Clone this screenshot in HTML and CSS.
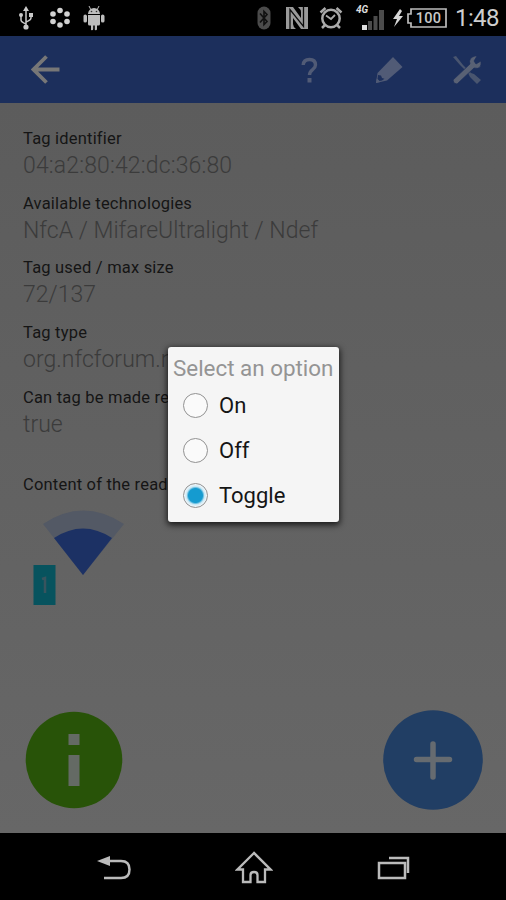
FILE: index.html
```html
<!DOCTYPE html>
<html lang="en">
<head>
<meta charset="utf-8">
<title>Tag details</title>
<link rel="stylesheet" href="styles.css">
</head>
<body>
<div class="phone">
  <header class="status">
    <div class="status-left">
      <svg width="16" height="26" viewBox="0 0 16 26" fill="none" stroke="#c9c9c9" stroke-width="1.5"><path d="M8 4V22M3 11v4q0 2 5 4M13 10v3q0 2-5 4"/><g fill="#c9c9c9" stroke="none"><path d="M8 1l3 5H5z"/><circle cx="8" cy="22" r="2.6"/><circle cx="3" cy="10" r="2"/><path d="M11 8h4v4h-4z"/></g></svg>
      <svg width="22" height="22" viewBox="0 0 22 22" fill="#d2d2d2"><circle cx="11" cy="3.5" r="2.8"/><circle cx="4" cy="7" r="2.8"/><circle cx="18" cy="7" r="2.8"/><circle cx="4" cy="14.5" r="2.8"/><circle cx="18" cy="14.5" r="2.8"/><circle cx="11" cy="18" r="2.8"/></svg>
      <svg width="22" height="26" viewBox="0 0 22 26" fill="#bdbdbd"><path d="M5 9a6 6 0 0 1 12 0zM5 10h12v9q0 1.500-1.500 1.500H14V24q0 1.300-1.300 1.300T11.800 24v-3.500h-1.600V24q0 1.300-1.300 1.300T8 24v-3.500H6.500Q5 20.500 5 19zM.5 11q0-1.500 1.700-1.500T4 11v5q0 1.500-1.800 1.500T.5 16zM18 11q0-1.500 1.700-1.500t1.800 1.500v5q0 1.500-1.800 1.500T18 16z"/><path d="M6 1l2 4M16 1l-2 4" stroke="#bdbdbd"/><circle cx="8.500" cy="6.500" r=".8" fill="#333"/><circle cx="13.500" cy="6.500" r=".8" fill="#333"/></svg>
    </div>
    <div class="status-right">
      <svg class="bt" width="14" height="24" viewBox="0 0 14 24"><rect x=".5" y=".5" width="13" height="23" rx="6.500" fill="#4b4b4b"/><path d="M3 7.500l7 8-3 3v-13l3 3-7 8" fill="none" stroke="#101010" stroke-width="1.600"/></svg>
      <svg class="nfc" width="22" height="22" viewBox="0 0 22 22"><path d="M0 0h7l8 11V5q0-2.500-3-5h10v22h-7L7 11v6q0 2.500 3 5H0z" fill="#9a9a9a"/><path d="M4 22V2.500l13.500 17V0" fill="none" stroke="#0c0c0c" stroke-width="1.300"/></svg>
      <svg class="alarm" width="24" height="24" viewBox="0 0 24 24" fill="none" stroke="#aaa" stroke-width="2.500"><circle cx="12" cy="12.500" r="8.700"/><path d="M7 9.500l5 3.500 4-4" stroke-width="1.800"/><path d="M1.500 6.500l5-4.500M22.500 6.500l-5-4.500M6 19l-3 3M18 19l3 3"/></svg>
      <div class="signal"><span>4G</span><svg width="22" height="20" viewBox="0 0 22 20"><path d="M0 15h5v5H0z" fill="#ddd"/><path d="M6 11h4v9H6zM11.500 6h4v14h-4zM17 0h5v20h-5z" fill="#4b4b4b"/></svg></div>
      <svg class="bolt" width="12" height="18" viewBox="0 0 12 18"><path d="M8 0L1 10h4l-3 8 9-11H7l3-5z" fill="#d6d6d6"/></svg>
      <div class="battery"><svg width="40" height="20" viewBox="0 0 40 20" fill="none" stroke="#bcbcbc" stroke-width="1.700"><path d="M4 1h35v18H4v-4H1V6h3z"/></svg><span>100</span></div>
      <span class="clock">1:48</span>
    </div>
  </header>
  <nav class="toolbar">
    <svg width="30" height="30" viewBox="0 0 30 30" fill="none" stroke="#777777" stroke-width="3.800"><path d="M28.500 14.500H4M15.500 1.500L2.500 14.500l13 13"/></svg>
    <div class="actions">
      <svg width="18" height="28" viewBox="0 0 18 28"><path d="M3.200 9Q3.500 3.500 9.500 3.500t6 5.500c0 4.500-6 4.500-6 10" fill="none" stroke="#515b76" stroke-width="3.400"/><path d="M7.500 22h4v4.500h-4z" fill="#515b76"/></svg>
      <svg width="28" height="28" viewBox="0 0 28 28"><path d="M18 1l9.500 10L12 24.500 1 27l1.500-10z" fill="#515b76"/><path d="M3 19l3 .5 1 2.500 2.500.8-2.500 1.700-2.500.5-2-2z" fill="#1c2f5c"/><path d="M1 27l.7-4.500 3.500 3.500z" fill="#515b76"/></svg>
      <svg width="30" height="30" viewBox="0 0 30 30"><path d="M1 2l3-1 7 9 8 8 3 1 7 6-4 4-7-7-2-4-8-8z" fill="#49556f"/><path d="M1 25L18 9q-2-6 5-8h2l-3 5 2 3 5-3q1 9-7 7L5 29l-3-1z" fill="#596174" stroke="#1c2f5c" stroke-width=".7"/></svg>
    </div>
  </nav>
  <main class="content">
    <dl class="details">
      <div><dt>Tag identifier</dt><dd class="identifier">04:a2:80:42:dc:36:80</dd></div>
      <div><dt>Available technologies</dt><dd>NfcA / MifareUltralight / Ndef</dd></div>
      <div><dt>Tag used / max size</dt><dd>72/137</dd></div>
      <div><dt>Tag type</dt><dd>org.nfcforum.n</dd></div>
      <div><dt>Can tag be made re</dt><dd>true</dd></div>
    </dl>
    <p class="record-title">Content of the read</p>
    <svg class="wifi" width="92" height="96" viewBox="0 0 92 96"><path d="M10 14Q50-13 91 14L50 65z" fill="#535965"/><path d="M21 28q29-19 58 0L50 65z" fill="#1c3164"/><path d="M.5 55h22v40H.5z" fill="#07535e"/><path d="M9 69l3-1v15" fill="none" stroke="#38545e" stroke-width="2.500"/></svg>
    <div class="fabs">
      <svg class="info" width="98" height="98" viewBox="0 0 98 98"><circle cx="49" cy="49" r="48.300" fill="#285308"/><path d="M43.500 23h11v11h-11zM43.500 44h11v31h-11z" fill="#646a64"/></svg>
      <svg width="100" height="100" viewBox="0 0 100 100"><circle cx="50" cy="50" r="49.800" fill="#213e64"/><path d="M50 34v33M33.500 49.500h33" stroke="#666b70" stroke-width="5.500" stroke-linecap="round"/></svg>
    </div>
    <section class="dialog">
      <h1>Select an option</h1>
      <label><i class="radio"></i><span>On</span></label>
      <label><i class="radio"></i><span>Off</span></label>
      <label><i class="radio checked"></i><span>Toggle</span></label>
    </section>
  </main>
  <footer class="navbar">
    <svg width="34" height="26" viewBox="0 0 34 26"><path d="M12 6h12q8.500 0 8.500 8.500T24 23H7" fill="none" stroke="#bbb" stroke-width="2.500"/><path d="M0 6l13-5v10z" fill="#bbb"/></svg>
    <svg width="38" height="34" viewBox="0 0 38 34" fill="none" stroke="#bbb" stroke-width="2.300"><path d="M19 2L2.500 18.500H8V31h7.500v-7q0-3 3.500-3t3.500 3v7H30V18.500h5.500z"/></svg>
    <svg width="34" height="24" viewBox="0 0 34 24" fill="none" stroke="#bbb" stroke-width="2.500"><path d="M2 7h26v15H2zM12 2h19v15"/></svg>
  </footer>
</div>
</body>
</html>
```
FILE: styles.css
```css
* { box-sizing: border-box; }
body { margin: 0; background: #000; font-family: Roboto, "Liberation Sans", sans-serif; }
svg { display: block; flex: none; }
.phone { width: 506px; height: 900px; display: flex; flex-direction: column; overflow: hidden; }
.status { height: 36px; display: flex; justify-content: space-between; background: #000; padding: 0 8px 0 18px; flex: none; }
.status-left, .status-right { display: flex; align-items: center; }
.status-left { gap: 14px; }
.status-left svg:nth-child(2) { margin-left: 1px; }
.status-left svg:nth-child(3) { margin-left: -2px; }
.nfc { margin-left: 15px; }
.alarm { margin-left: 11px; }
.signal { position: relative; width: 28px; height: 24px; margin-left: 13px; display: flex; justify-content: flex-end; align-items: flex-end; }
.signal span { position: absolute; left: 0; top: -1px; font-size: 10px; line-height: 10px; font-weight: 700; font-style: italic; color: #ddd; }
.bolt { margin-left: 8px; }
.battery { position: relative; width: 40px; height: 20px; margin-left: 3px; }
.battery span { position: absolute; inset: 0 0 0 3px; text-align: center; line-height: 21px; font-size: 14.5px; font-weight: 500; letter-spacing: .3px; color: #c8c8c8; }
.clock { margin-left: 8px; width: 43px; font-size: 24px; line-height: 37px; color: #cecece; letter-spacing: -.6px; }
.toolbar { height: 67px; flex: none; display: flex; align-items: center; justify-content: space-between; background: #1c2f5c; padding: 0 24px 0 31px; }
.actions { display: flex; align-items: center; gap: 58px; }
.actions svg:first-child { margin-right: -1px; }
.actions svg:nth-child(3) { margin-left: -9px; }
.content { position: relative; flex: 1; display: flex; flex-direction: column; padding: 24px 23px 23px; background: linear-gradient(#5c5c5c, #676767); }
.details { margin: 0; }
.details div { height: 64.7px; }
dt, .record-title { margin: 0; font-size: 16.5px; line-height: 24px; color: #151515; white-space: nowrap; letter-spacing: .2px; }
dd { margin: 0; font-size: 23px; line-height: 30px; color: #3b3b3b; white-space: nowrap; font-weight: 300; letter-spacing: .03px; }
.identifier { letter-spacing: .15px; }
.record-title { margin-top: 22.5px; }
.wifi { margin: 13px 0 0 10px; }
.fabs { margin-top: auto; display: flex; justify-content: space-between; align-items: center; padding-left: 2px; }
.dialog { position: absolute; left: 168px; top: 244px; width: 171px; height: 175px; border-radius: 3px; background: #f5f5f5; box-shadow: 0 2px 6px 1px rgba(0,0,0,.75); }
h1 { margin: 0; padding: 7px 0 0 5px; height: 35.5px; font-size: 22.4px; line-height: 28px; font-weight: 400; color: #949494; white-space: nowrap; }
label { height: 45px; display: flex; align-items: center; gap: 11px; padding-left: 15px; font-size: 22px; color: #151515; }
.radio { width: 25px; height: 25px; border: 1.5px solid #929292; border-radius: 50%; flex: none; background: #fafafa; }
.radio.checked { background: radial-gradient(circle, #159bd0 0 7px, #c8e7f4 9px, #eef6fa 11px); }
.navbar { height: 67px; flex: none; display: flex; align-items: center; justify-content: space-between; padding: 2px 95px 0 97px; background: #000; }
```
